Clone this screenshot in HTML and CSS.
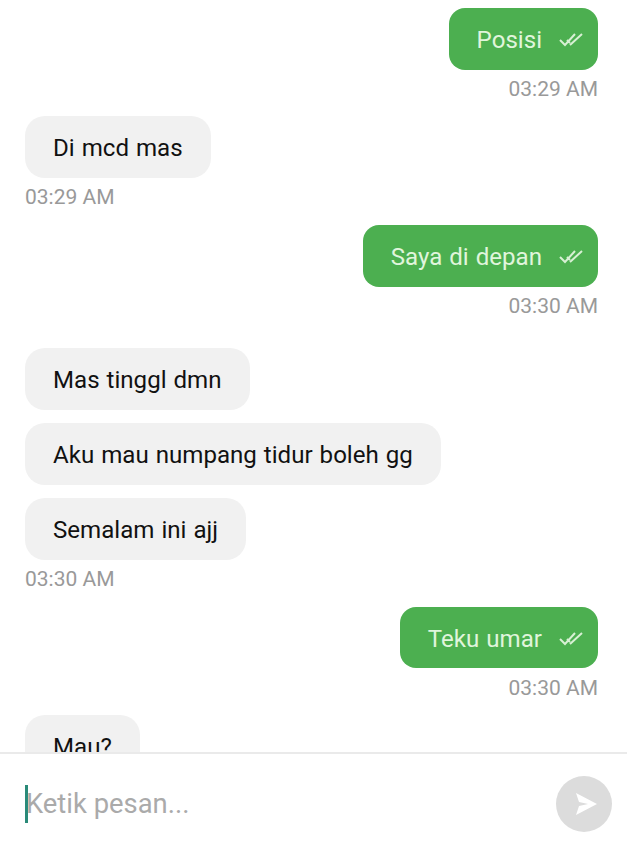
FILE: index.html
```html
<!DOCTYPE html>
<html lang="en">
<head>
<meta charset="UTF-8">
<meta name="viewport" content="width=device-width, initial-scale=1.0">
<title>Chat</title>
<link rel="stylesheet" href="styles.css">
</head>
<body>
<svg class="sprite" width="0" height="0">
    <symbol id="ticks" viewBox="0 0 24 16">
        <path d="M1 8l5 5L16 2M8 8l3 3M11 13L23 2" fill="none" stroke="currentColor" stroke-width="2"/>
    </symbol>
</svg>
<div class="chat">
    <div class="messages">
        <div class="msg out">
            <div class="bubble">Posisi<svg class="ticks"><use href="#ticks"/></svg></div>
            <div class="time">03:29 AM</div>
        </div>
        <div class="msg in">
            <div class="bubble">Di mcd mas</div>
            <div class="time">03:29 AM</div>
        </div>
        <div class="msg out wide-gap">
            <div class="bubble">Saya di depan<svg class="ticks"><use href="#ticks"/></svg></div>
            <div class="time">03:30 AM</div>
        </div>
        <div class="msg in">
            <div class="bubble">Mas tinggl dmn</div>
            <div class="bubble">Aku mau numpang tidur boleh gg</div>
            <div class="bubble">Semalam ini ajj</div>
            <div class="time">03:30 AM</div>
        </div>
        <div class="msg out">
            <div class="bubble">Teku umar<svg class="ticks"><use href="#ticks"/></svg></div>
            <div class="time">03:30 AM</div>
        </div>
        <div class="msg in">
            <div class="bubble">Mau?</div>
        </div>
    </div>
    <div class="composer">
        <div class="field"><span class="caret"></span><span class="placeholder">Ketik pesan...</span></div>
        <button class="send">
            <svg width="24" height="24" viewBox="0 0 24 24"><path d="M2 1l21 11L2 23l3-9 9-2-9-2z" fill="#fff"/></svg>
        </button>
    </div>
</div>
</body>
</html>
```

FILE: styles.css
```css
body {
    margin: 0;
    background: #fff;
    font-family: Roboto, sans-serif;
}
.sprite {
    position: absolute;
}
.chat {
    height: 853px;
    display: flex;
    flex-direction: column;
    overflow: hidden;
}
.messages {
    width: 627px;
    height: 754px;
    padding: 8px 29px 0 25px;
    box-sizing: border-box;
    overflow: hidden;
    border-bottom: 2px solid #eaeaea;
}
.msg {
    display: flex;
    flex-direction: column;
    gap: 13.5px;
    margin-bottom: 13.4px;
}
.msg.in {
    align-items: flex-start;
    margin-bottom: 13.75px;
}
.msg.out {
    align-items: flex-end;
}
.msg.wide-gap {
    margin-bottom: 28px;
}
.bubble {
    height: 61.5px;
    flex-shrink: 0;
    box-sizing: border-box;
    padding: 2px 28px 0;
    display: flex;
    align-items: center;
    font-size: 24.1px;
    word-spacing: 1px;
    white-space: pre;
}
.in .bubble {
    background: #f1f1f1;
    color: #111;
    border-radius: 20px;
}
.out .bubble {
    background: #4caf50;
    color: #e0f5dc;
    border-radius: 16px;
    padding-right: 15px;
}
.ticks {
    width: 24px;
    height: 16px;
    margin-left: 17px;
    color: #d8f0d4;
}
.time {
    margin-top: -8px;
    height: 28px;
    line-height: 28px;
    font-size: 21px;
    color: #999;
}
.composer {
    flex: 1;
    display: flex;
    align-items: center;
    justify-content: space-between;
    padding: 0 28px 0 25px;
}
.field {
    display: flex;
    align-items: center;
}
.caret {
    width: 3px;
    height: 38px;
    background: #2a8a78;
    margin-right: -2px;
}
.placeholder {
    font-size: 27.4px;
    color: #aaa;
}
.send {
    width: 56px;
    height: 56px;
    padding: 0 0 0 3px;
    border: none;
    border-radius: 50%;
    background: #dcdcdc;
    display: flex;
    align-items: center;
    justify-content: center;
}
```
